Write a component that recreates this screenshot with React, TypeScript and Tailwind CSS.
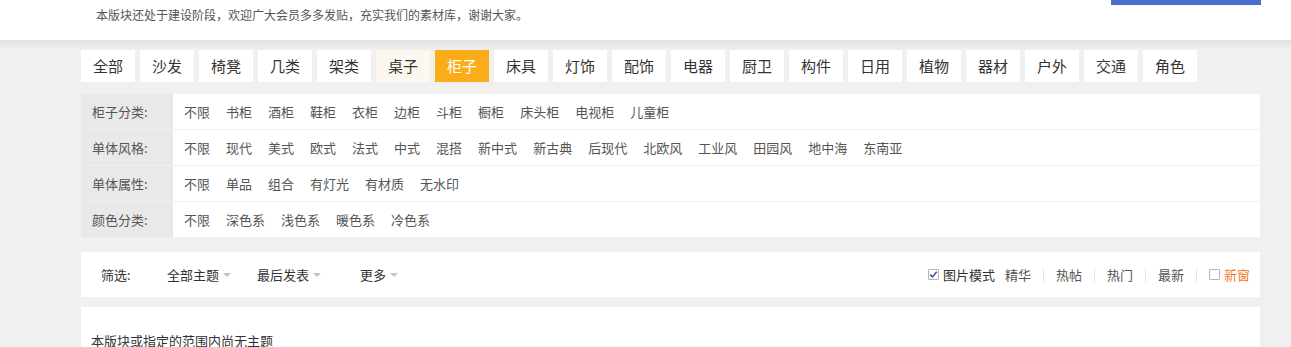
import React from "react";

const tabs = ["全部","沙发","椅凳","几类","架类","桌子","柜子","床具","灯饰","配饰","电器","厨卫","构件","日用","植物","器材","户外","交通","角色"];

const rows: { label: string; items: string[] }[] = [
  { label: "柜子分类:", items: ["不限","书柜","酒柜","鞋柜","衣柜","边柜","斗柜","橱柜","床头柜","电视柜","儿童柜"] },
  { label: "单体风格:", items: ["不限","现代","美式","欧式","法式","中式","混搭","新中式","新古典","后现代","北欧风","工业风","田园风","地中海","东南亚"] },
  { label: "单体属性:", items: ["不限","单品","组合","有灯光","有材质","无水印"] },
  { label: "颜色分类:", items: ["不限","深色系","浅色系","暖色系","冷色系"] },
];

const font = { fontFamily: '"Microsoft YaHei","Noto Sans CJK SC",sans-serif' };

function Caret() {
  return <span className="ml-[4px] inline-block w-0 h-0 border-l-[4px] border-r-[4px] border-t-[4px] border-l-transparent border-r-transparent border-t-[#c4c4c4] align-middle relative top-[-1px]" />;
}

function Check({ checked }: { checked: boolean }) {
  return (
    <span className="inline-flex items-center justify-center w-[11px] h-[11px] border border-[#b5b5b5] bg-white rounded-[1px] mr-[4px]">
      {checked && (
        <svg width="9" height="9" viewBox="0 0 9 9">
          <path d="M1.2 4.6 L3.5 6.9 L7.8 1.8" fill="none" stroke="#3a5a8c" strokeWidth="1.6" />
        </svg>
      )}
    </span>
  );
}

export default function App() {
  return (
    <div className="w-[1291px] h-[347px] overflow-hidden bg-[#f0f0f0] text-[#333]" style={font}>
      <div className="bg-white h-[40px] relative">
        <div className="absolute left-[1111px] top-0 w-[150px] h-[5px] bg-[#4a6ecb]" />
        <div className="pl-[96px] pt-[6px] text-[12px] leading-[18px] text-[#555]">本版块还处于建设阶段，欢迎广大会员多多发贴，充实我们的素材库，谢谢大家。</div>
      </div>
      <div className="h-[10px] bg-gradient-to-b from-[#e2e2e2] to-[#f0f0f0]" />
      <div className="ml-[81px] w-[1179px]">
        <div className="flex gap-[5px]">
          {tabs.map((t) => (
            <div
              key={t}
              className={
                "w-[54px] h-[32px] flex items-center justify-center text-[15px] " +
                (t === "柜子" ? "bg-[#fbad19] text-white" : t === "桌子" ? "bg-[#fcf8ef] text-[#333]" : "bg-white text-[#333]")
              }
            >
              {t}
            </div>
          ))}
        </div>
        <div className="mt-[12px]">
          {rows.map((r, i) => (
            <div key={r.label} className={"flex " + (i < rows.length - 1 ? "h-[36px] border-b border-[#efefef]" : "h-[35px]")}>
              <div className="w-[92px] bg-[#e9e9e9] pl-[11px] flex items-center text-[13px] text-[#555]">{r.label}</div>
              <div className="flex-1 bg-white flex items-center pl-[11px] gap-[16px] text-[13px] text-[#555]">
                {r.items.map((it) => (
                  <span key={it}>{it}</span>
                ))}
              </div>
            </div>
          ))}
        </div>
        <div className="mt-[15px] h-[45px] bg-white flex items-center text-[13px] text-[#333]">
          <span className="ml-[20px] w-[66px]">筛选:</span>
          <span className="w-[90px]">全部主题<Caret /></span>
          <span className="w-[103px]">最后发表<Caret /></span>
          <span>更多<Caret /></span>
          <div className="ml-auto mr-[10px] flex items-center">
            <Check checked />
            <span className="text-[13px] text-[#333]">图片模式</span>
            <span className="ml-[10px] text-[#555]">精华</span>
            <span className="mx-[12px] w-px h-[14px] bg-[#e6e6e6]" />
            <span className="text-[#555]">热帖</span>
            <span className="mx-[12px] w-px h-[14px] bg-[#e6e6e6]" />
            <span className="text-[#555]">热门</span>
            <span className="mx-[12px] w-px h-[14px] bg-[#e6e6e6]" />
            <span className="text-[#555]">最新</span>
            <span className="mx-[12px] w-px h-[14px] bg-[#e6e6e6]" />
            <Check checked={false} />
            <span className="text-[#f27b1f]">新窗</span>
          </div>
        </div>
        <div className="mt-[10px] h-[60px] bg-white pl-[10px] pt-[25px] text-[13px] text-[#333] leading-[18px]">本版块或指定的范围内尚无主题</div>
      </div>
    </div>
  );
}
